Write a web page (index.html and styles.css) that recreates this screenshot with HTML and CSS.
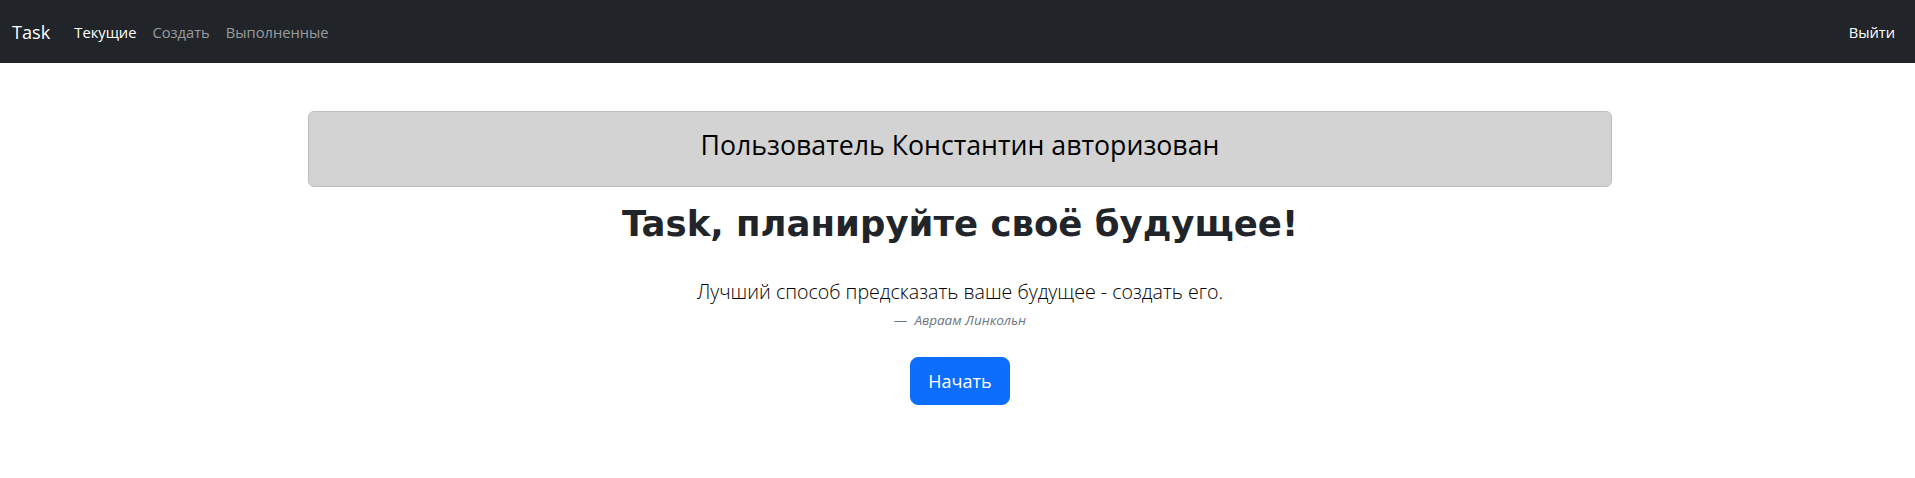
FILE: index.html
```html
<!DOCTYPE html>
<html lang="ru">
<head>
<meta charset="utf-8">
<title>Task</title>
<link rel="stylesheet" href="styles.css">
</head>
<body>
<nav class="navbar">
  <div class="nav-left">
    <a class="brand" href="#">Task</a>
    <a class="nav-link active" href="#">Текущие</a>
    <a class="nav-link" href="#">Создать</a>
    <a class="nav-link" href="#">Выполненные</a>
  </div>
  <a class="nav-link active" href="#">Выйти</a>
</nav>
<div class="page">
  <main class="container">
    <div class="alert">
      <h3 class="alert-title">Пользователь Константин авторизован</h3>
    </div>
    <section class="hero">
      <h1 class="hero-title">Task, планируйте своё будущее!</h1>
      <figure class="quote">
        <blockquote class="quote-text">
          <p>Лучший способ предсказать ваше будущее - создать его.</p>
        </blockquote>
        <figcaption class="quote-footer"><cite>Авраам Линкольн</cite></figcaption>
      </figure>
      <button class="btn-start" type="button">Начать</button>
    </section>
  </main>
</div>
</body>
</html>
```
FILE: styles.css
```css
* { box-sizing: border-box; }
html, body { margin: 0; padding: 0; }
body {
  font-family: "Open Sans", "Noto Sans", sans-serif;
  color: #212529;
  background: #fff;
  font-size: 16px;
  line-height: 1.5;
}
a { text-decoration: none; }

.navbar {
  height: 63px;
  background: #212529;
  display: flex;
  align-items: center;
  justify-content: space-between;
  padding: 0 12px;
}
.nav-left { display: flex; align-items: center; }
.brand {
  color: #fff;
  font-size: 18.2px;
  margin-right: 16px;
  line-height: 30px;
}
.nav-link {
  color: rgba(255,255,255,.55);
  font-size: 14.7px;
  padding: 8px 8px;
  line-height: 24px;
}
.nav-link.active { color: #fff; }

.page { padding-left: 5px; }
.container {
  width: 1304px;
  margin: 48px auto 0;
}
.alert {
  background: #d3d3d3;
  border: 1px solid #bdbdbd;
  border-radius: 6px;
  padding: 16px;
  margin-bottom: 16px;
  text-align: center;
}
.alert-title {
  margin: 0 0 8px;
  font-size: 26.7px;
  font-weight: 500;
  line-height: 33.6px;
  color: #000;
}
.hero { text-align: center; }
.hero-title {
  font-family: "DejaVu Sans", Verdana, sans-serif;
  font-weight: 700;
  font-size: 35.5px;
  line-height: 1.2;
  margin: 2px 0 32px;
}
.quote { margin: 0 0 26px; }
.quote-text { margin: 0; font-size: 19.6px; line-height: 30px; font-weight: 300; color: #000; }
.quote-text p { margin: 0; }
.quote-footer {
  margin-top: 3px;
  font-size: 13.5px;
  line-height: 21px;
  color: #6c757d;
}
.quote-footer::before { content: "\2014\00A0\00A0"; }
.btn-start {
  font-family: inherit;
  font-size: 18px;
  line-height: 30px;
  padding: 8px 17px;
  color: #fff;
  background: #0d6efd;
  border: 1px solid #0d6efd;
  border-radius: 8px;
  cursor: pointer;
}
```
